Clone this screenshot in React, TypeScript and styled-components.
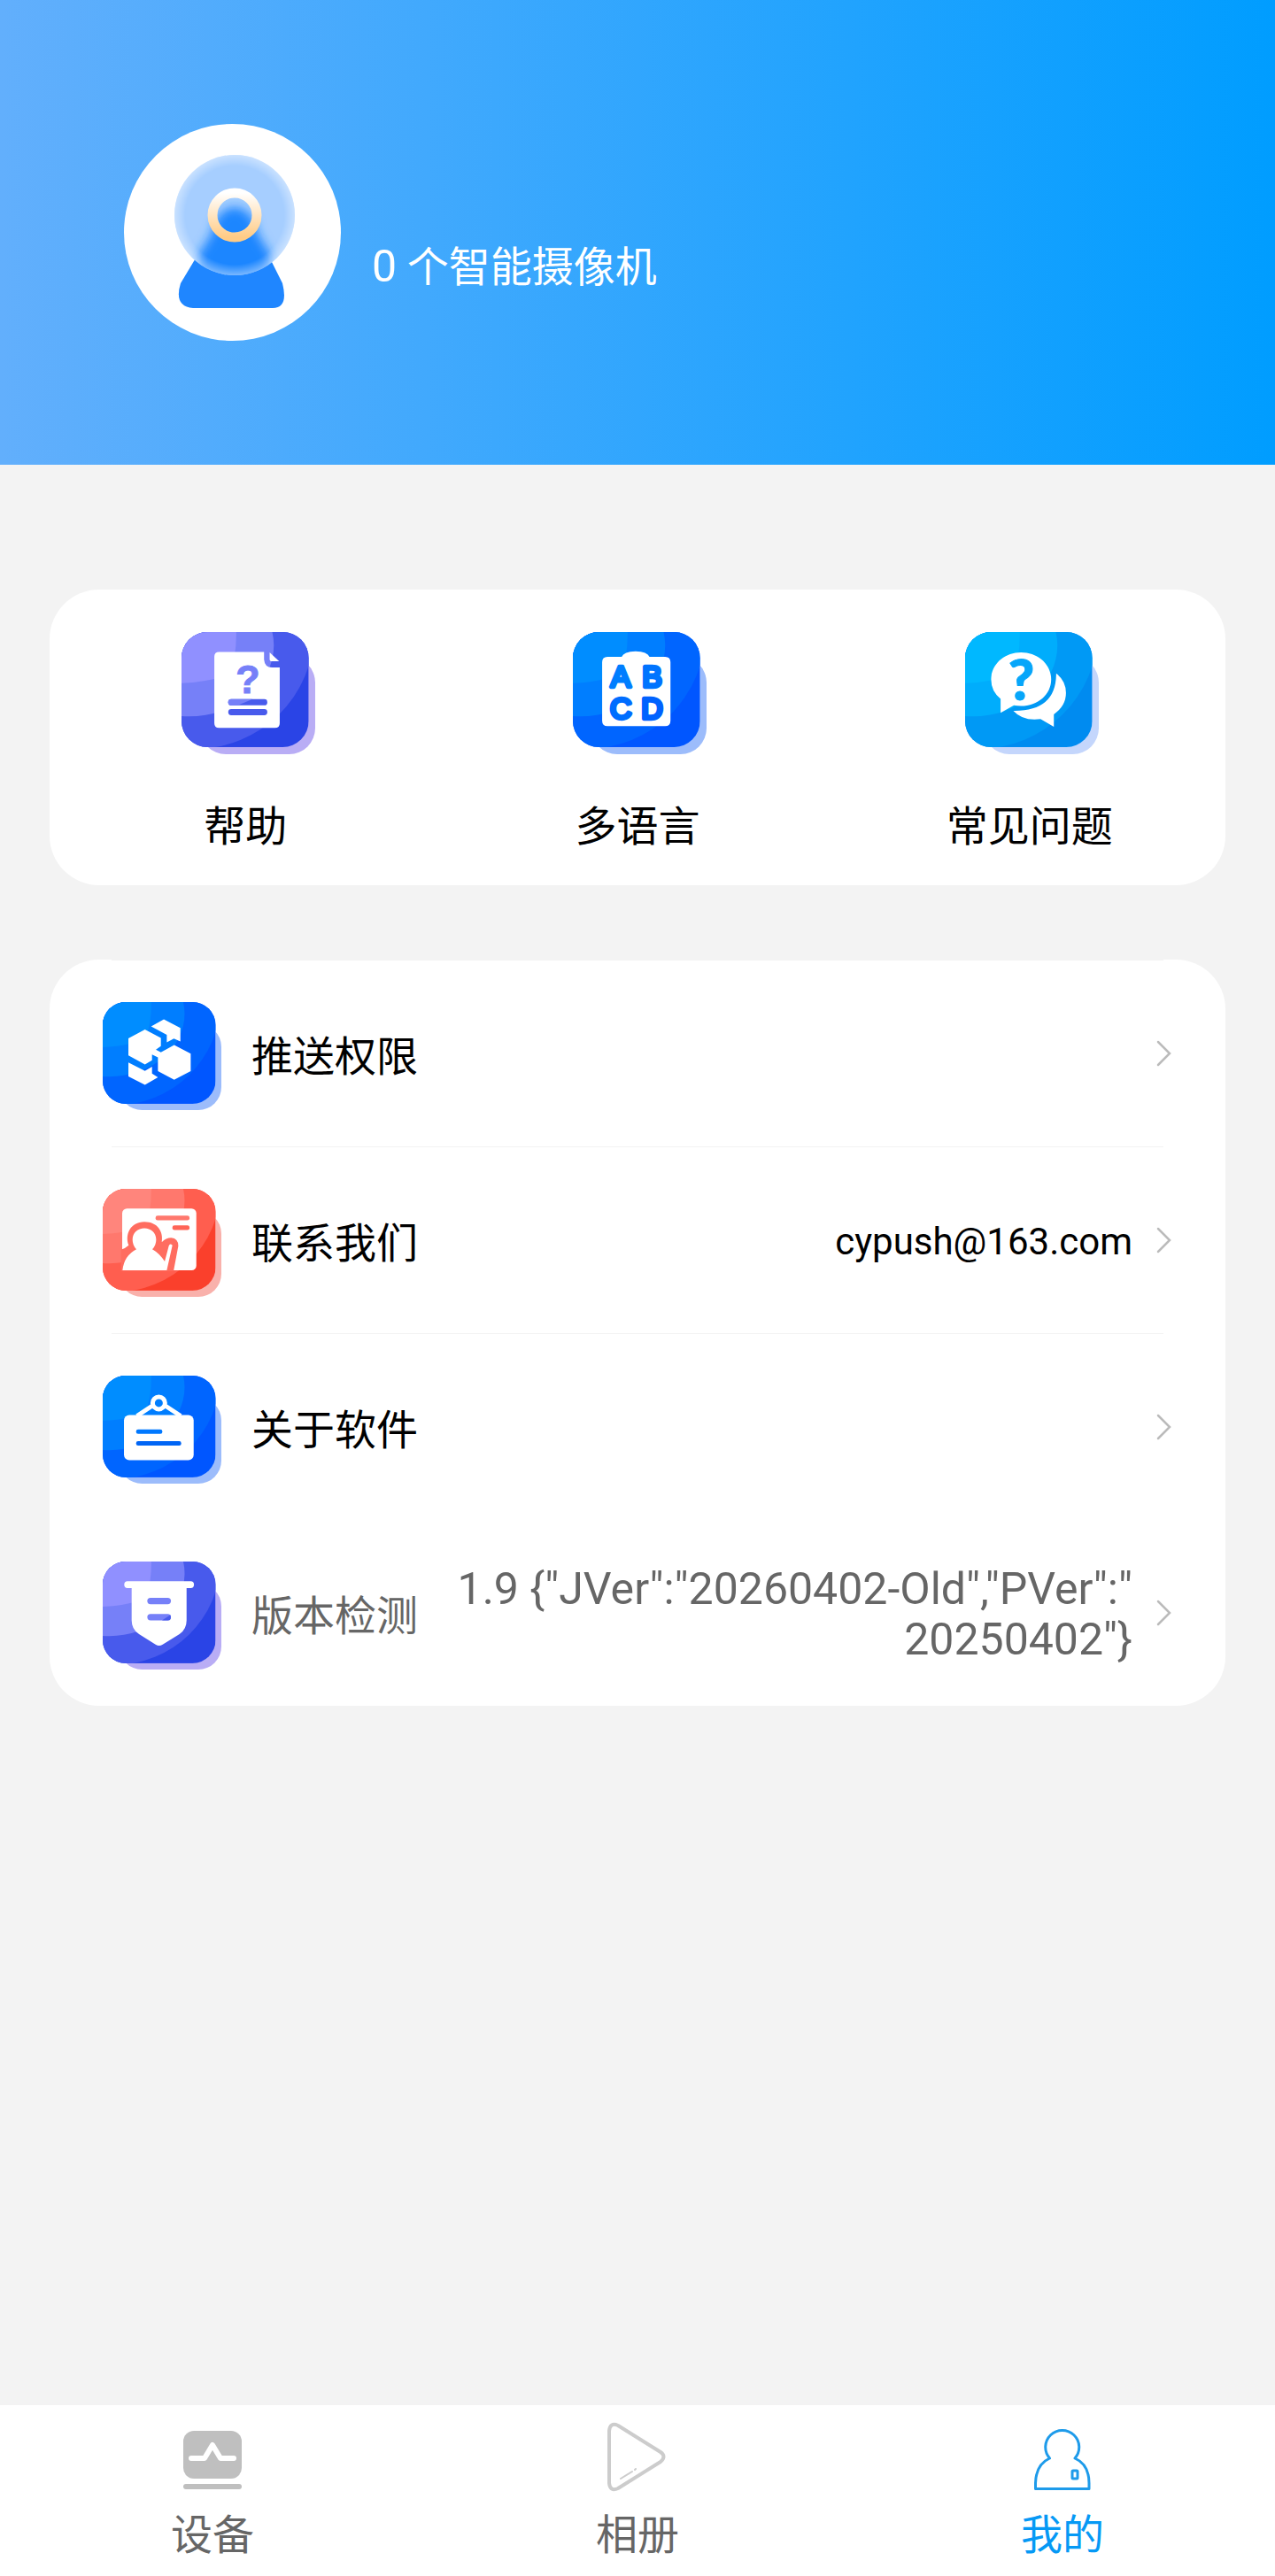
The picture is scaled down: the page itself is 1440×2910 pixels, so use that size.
import type { ReactNode } from 'react';
import styled, { createGlobalStyle } from 'styled-components';

type Palette = { bands: [string, string, string, string]; shadow: string };

const purple: Palette = { bands: ['#9090ff', '#7680f8', '#485aec', '#2a44e6'], shadow: '#b9adf5' };
const blue: Palette = { bands: ['#008dff', '#007eff', '#0065ff', '#0056ff'], shadow: '#9cbcfb' };
const cyan: Palette = { bands: ['#00b8ff', '#00adfc', '#0099f5', '#008bf0'], shadow: '#c4d6fc' };
const red: Palette = { bands: ['#ff857c', '#ff786d', '#ff5e4f', '#fa402c'], shadow: '#f9b1ab' };

type TileProps = { id: string; palette: Palette; children: ReactNode };

// rounded tile with four colour bands and an offset shadow, the glyph goes on top
const Tile = ({ id, palette, children }: TileProps) => (
  <svg viewBox="0 0 452 413" preserveAspectRatio="none" aria-hidden="true">
    <defs>
      <clipPath id={id}>
        <rect width="430" height="389" rx="88" />
      </clipPath>
    </defs>
    <rect x="62" y="83" width="390" height="330" rx="88" fill={palette.shadow} />
    <g clipPath={`url(#${id})`}>
      <rect width="430" height="389" fill={palette.bands[3]} />
      <ellipse cx="45" cy="0" rx="402" ry="395" fill={palette.bands[2]} />
      <ellipse cx="25" cy="45" rx="287" ry="240" fill={palette.bands[1]} />
      <path d="M0 0H185Q186 90 160 145Q80 170 0 173Z" fill={palette.bands[0]} />
    </g>
    {children}
  </svg>
);

const HelpIcon = () => (
  <Tile id="tile-help" palette={purple}>
    <path
      d="M129 67H279V93Q281 120 306 120H332V308Q332 324 316 324H127Q111 324 111 308V83Q111 67 127 67Z"
      fill="#fff"
    />
    <path d="M298 69L330 99H306Q298 99 298 91Z" fill="#fff" />
    <GlyphText x="224" y="206" fontSize="134" fill="#7680f8" stroke="#7680f8" strokeWidth="3">
      ?
    </GlyphText>
    <rect x="158" y="227" width="132" height="21" rx="10" fill="#485aec" />
    <path d="M168 227H240Q215 238 190 248H168A10 10 0 0 1 168 227Z" fill="#7680f8" />
    <rect x="158" y="260" width="132" height="21" rx="10" fill="#485aec" />
  </Tile>
);

const LanguageIcon = () => (
  <Tile id="tile-language" palette={blue}>
    <path
      d="M117 84H165Q172 66 212 65Q252 66 259 84H312Q330 84 330 102V300Q330 318 312 318H117Q99 318 99 300V102Q99 84 117 84Z"
      fill="#fff"
    />
    <RoundText x="162" y="187" fill="#007eff">
      A
    </RoundText>
    <RoundText x="268" y="187" fill="#0074ff">
      B
    </RoundText>
    <RoundText x="162" y="292" fill="#006dff">
      C
    </RoundText>
    <RoundText x="268" y="292" fill="#0062ff">
      D
    </RoundText>
  </Tile>
);

const FaqIcon = () => (
  <Tile id="tile-faq" palette={cyan}>
    <g transform="translate(-92 -72)">
      <path
        d="M281 141C338 141 383 181 383 232S338 322 281 322Q268 322 257 320L212 345V298Q180 272 180 232C180 181 225 141 281 141Z"
        fill="#fff"
      />
      <path
        d="M400 212Q433 237 433 278Q433 322 392 350V392L347 366Q288 374 255 338Q400 340 400 212Z"
        fill="#fff"
      />
      <BubbleText x="282" y="302" fill="#06a6fa" stroke="#06a6fa" strokeWidth="3">
        ?
      </BubbleText>
    </g>
  </Tile>
);

const PushIcon = () => (
  <Tile id="tile-push" palette={blue}>
    <g transform="scale(1.125) translate(-195 -157)" fill="#fff">
      <path d="M338 250L392 279V307L375 319L392 328L437 303L493 332V392L437 421L382 392V345L362 335V355L338 369L282 338V280Z" />
      <path d="M402 216L458 245V291L436 281L412 294V268L359 240Z" />
      <path d="M282 362L338 391L362 377V400L382 413L338 438L282 410Z" />
    </g>
  </Tile>
);

const ContactIcon = () => (
  <Tile id="tile-contact" palette={red}>
    <g transform="scale(1.125) translate(-46 -70)">
      <rect x="112" y="137" width="251" height="210" rx="16" fill="#fff" />
      <rect x="225" y="161" width="115" height="16" rx="7" fill="#ff786d" />
      <rect x="282" y="194" width="58" height="16" rx="7" fill="#ff6557" />
      <path
        d="M108 277Q122 273 134 262C120 225 140 182 187 182C232 182 252 215 246 251Q260 236 278 236Q302 238 302 264L286 349H108Z"
        fill="#ff6d60"
      />
      <path
        d="M113 347Q118 297 160 275Q147 262 147 242C147 219 165 204 187 204S227 219 227 242Q227 262 214 275Q240 290 256 317L270 263Q274 254 282 262L263 347Z"
        fill="#fff"
      />
    </g>
  </Tile>
);

const AboutIcon = () => (
  <Tile id="tile-about" palette={blue}>
    <g transform="scale(1.125) translate(-46 -73)">
      <path d="M162 210L213 176M310 210L259 176" stroke="#fff" strokeWidth="15" />
      <circle cx="236" cy="166" r="21" fill="none" stroke="#fff" strokeWidth="15" />
      <rect x="118" y="207" width="236" height="153" rx="18" fill="#fff" />
      <rect x="159" y="256" width="89" height="15" rx="7" fill="#0078ff" />
      <rect x="159" y="296" width="153" height="15" rx="7" fill="#0065f5" />
    </g>
  </Tile>
);

const VersionIcon = () => (
  <Tile id="tile-version" palette={purple}>
    <g transform="scale(1.125) translate(-195 -103)">
      <rect x="268" y="170" width="236" height="23" rx="11" fill="#fff" />
      <path
        d="M293 180H479V303Q479 333 455 350L398 385Q386 393 374 385L318 350Q293 333 293 303Z"
        fill="#fff"
      />
      <rect x="346" y="226" width="80" height="22" rx="11" fill="#7680f8" />
      <rect x="346" y="281" width="80" height="22" rx="11" fill="#7680f8" />
      <path d="M396 303L424 284Q430 303 415 303Z" fill="#485aec" />
    </g>
  </Tile>
);

const Camera = () => (
  <svg viewBox="0 0 245 245" aria-hidden="true">
    <defs>
      <linearGradient id="camera-ring" x1="0" y1="0" x2="0" y2="1">
        <stop offset="0" stopColor="#fff" />
        <stop offset="1" stopColor="#ffcb85" />
      </linearGradient>
      <radialGradient id="camera-rim">
        <stop offset="0.82" stopColor="#fff" stopOpacity="0" />
        <stop offset="1" stopColor="#fff" stopOpacity="0.4" />
      </radialGradient>
      <filter id="camera-blur" x="-30%" y="-30%" width="160%" height="160%">
        <feGaussianBlur stdDeviation="6" />
      </filter>
      <clipPath id="camera-clip">
        <circle cx="125" cy="103" r="68" />
      </clipPath>
    </defs>
    <path d="M82 150H164L179 180Q186 208 168 208H78Q56 206 64 180Z" fill="#1f86ff" />
    <circle cx="125" cy="103" r="68" fill="#a6ceff" />
    <g clipPath="url(#camera-clip)">
      <path
        d="M125 94Q146 96 151 124L166 148V180H84V148L99 124Q104 96 125 94Z"
        fill="#1f86ff"
        filter="url(#camera-blur)"
      />
    </g>
    <circle cx="125" cy="103" r="68" fill="url(#camera-rim)" />
    <circle cx="125" cy="103" r="25" fill="none" stroke="url(#camera-ring)" strokeWidth="11" />
  </svg>
);

const DeviceIcon = () => (
  <svg viewBox="0 0 80 80" aria-hidden="true">
    <rect x="7" y="11" width="66" height="54" rx="12" fill="#bfbfbf" />
    <rect x="7" y="71" width="66" height="6" rx="3" fill="#bfbfbf" />
    <path
      d="M16 42H31L40 27L49 42H64"
      fill="none"
      stroke="#fff"
      strokeWidth="6"
      strokeLinecap="round"
      strokeLinejoin="round"
    />
  </svg>
);

const AlbumIcon = () => (
  <svg viewBox="0 0 80 80" aria-hidden="true" fill="none" stroke="#ccc" strokeLinecap="round">
    <path
      d="M8 11Q9 1 18 5L66 35Q73 40 66 46L18 76Q9 80 8 70Z"
      strokeWidth="4"
      strokeLinejoin="round"
    />
    <path d="M21 65L34 57M37 55L38 54" strokeWidth="2" />
  </svg>
);

const MineIcon = () => (
  <svg viewBox="0 0 80 80" aria-hidden="true" fill="none" stroke="#1e9bea" strokeWidth="3">
    <path
      d="M25.500 42A19 19 0 1 1 54 42Q70 49 70 70V76.500H9.500V70Q10 49 25.500 42Z"
      strokeLinejoin="round"
    />
    <rect x="51" y="56" width="6" height="9" rx="1" />
  </svg>
);

const Chevron = () => (
  <ChevronIcon viewBox="0 0 18 30" aria-hidden="true">
    <path d="M2 2L15 15L2 28" fill="none" stroke="#bbb" strokeWidth="2.500" strokeLinecap="round" />
  </ChevronIcon>
);

const shortcuts = [
  { label: '帮助', icon: <HelpIcon /> },
  { label: '多语言', icon: <LanguageIcon /> },
  { label: '常见问题', icon: <FaqIcon /> },
];

const tabs = [
  { label: '设备', icon: <DeviceIcon />, active: false },
  { label: '相册', icon: <AlbumIcon />, active: false },
  { label: '我的', icon: <MineIcon />, active: true },
];

const App = () => {
  return (
    <>
      <GlobalStyle />
      <Page>
        <Header>
          <Avatar>
            <Camera />
          </Avatar>
          <DeviceCount>
            <Count>0</Count> 个智能摄像机
          </DeviceCount>
        </Header>
        <Main>
          <Shortcuts>
            {shortcuts.map((item) => (
              <Shortcut key={item.label} type="button">
                <ShortcutIcon>{item.icon}</ShortcutIcon>
                {item.label}
              </Shortcut>
            ))}
          </Shortcuts>
          <Settings>
            <Divider />
            <Row type="button">
              <RowIcon>
                <PushIcon />
              </RowIcon>
              <RowLabel>推送权限</RowLabel>
              <RowValue />
              <Chevron />
            </Row>
            <Divider />
            <Row type="button">
              <RowIcon>
                <ContactIcon />
              </RowIcon>
              <RowLabel>联系我们</RowLabel>
              <RowValue $small>cypush@163.com</RowValue>
              <Chevron />
            </Row>
            <Divider />
            <Row type="button">
              <RowIcon>
                <AboutIcon />
              </RowIcon>
              <RowLabel>关于软件</RowLabel>
              <RowValue />
              <Chevron />
            </Row>
            <Row type="button" $muted>
              <RowIcon>
                <VersionIcon />
              </RowIcon>
              <RowLabel>版本检测</RowLabel>
              <RowValue>{'1.9 {"JVer":"20260402-Old","PVer":"20250402"}'}</RowValue>
              <Chevron />
            </Row>
          </Settings>
        </Main>
        <TabBar>
          {tabs.map((tab) => (
            <Tab key={tab.label} href="#" $active={tab.active}>
              {tab.icon}
              {tab.label}
            </Tab>
          ))}
        </TabBar>
      </Page>
    </>
  );
};

export default App;

const GlobalStyle = createGlobalStyle`
  * {
    box-sizing: border-box;
  }
  body {
    margin: 0;
    background: #f3f3f3;
    font-family: Roboto, 'Noto Sans CJK SC', sans-serif;
    font-size: 47px;
    line-height: 60px;
    color: #000;
  }
  button {
    border: 0;
    padding: 0;
    background: none;
    font: inherit;
    color: inherit;
    cursor: pointer;
  }
  svg {
    display: block;
  }
`;

const GlyphText = styled.text`
  font-family: 'Liberation Sans', sans-serif;
  font-weight: 700;
  text-anchor: middle;
`;

/* thin letters with a thick round stroke, for rounded corners */
const RoundText = styled(GlyphText)`
  font-size: 101px;
  font-weight: 400;
  stroke: ${({ fill }) => fill};
  stroke-width: 13px;
  stroke-linejoin: round;
`;

const BubbleText = styled(GlyphText)`
  font-family: Lato, sans-serif;
  font-size: 190px;
  font-weight: 900;
`;

const Page = styled.div`
  display: flex;
  flex-direction: column;
  min-height: 100vh;
`;

const Header = styled.header`
  display: flex;
  align-items: flex-end;
  gap: 35px;
  padding: 140px;
  background: linear-gradient(90deg, #62affc, #009dff);
`;

const Avatar = styled.div`
  flex: none;
  width: 245px;
  height: 245px;
  border-radius: 50%;
  background: #fff;
`;

const DeviceCount = styled.div`
  padding-bottom: 53px;
  color: #fff;
`;

const Count = styled.span`
  font-size: 50px;
`;

const Main = styled.main`
  display: grid;
  gap: 84px;
  padding: 141px 56px;
`;

const Card = styled.section`
  border-radius: 56px;
  background: #fff;
`;

const Shortcuts = styled(Card)`
  display: grid;
  grid-template-columns: repeat(3, 1fr);
  padding: 48px 0 36px;
`;

const Shortcut = styled.button`
  display: flex;
  flex-direction: column;
  align-items: center;
  gap: 52px;
`;

const ShortcutIcon = styled.span`
  padding-left: 6px;
  svg {
    width: 151px;
    height: 138px;
  }
`;

const Settings = styled(Card)`
  display: flex;
  flex-direction: column;
`;

const Row = styled.button<{ $muted?: boolean }>`
  display: flex;
  align-items: center;
  height: 210px;
  padding: 0 60px;
  color: ${({ $muted }) => ($muted ? '#666' : '#000')};
  text-align: left;
`;

const RowIcon = styled.span`
  flex: none;
  padding-top: 6px;
  svg {
    width: 134px;
    height: 122px;
  }
`;

const RowLabel = styled.span`
  flex: none;
  padding: 8px 34px 0;
`;

const RowValue = styled.span<{ $small?: boolean }>`
  flex: 1;
  min-width: 0;
  padding-top: 3px;
  font-size: ${({ $small }) => ($small ? '42px' : '50px')};
  line-height: 57px;
  text-align: right;
  line-break: anywhere;
`;

const ChevronIcon = styled.svg`
  flex: none;
  width: 18px;
  height: 30px;
  margin-left: 27px;
`;

const Divider = styled.hr`
  align-self: stretch;
  height: 1px;
  margin: 0 70px;
  border: 0;
  background: #f3f3f3;
`;

const TabBar = styled.nav`
  display: grid;
  grid-template-columns: repeat(3, 1fr);
  margin-top: auto;
  padding: 18px 0 16px;
  background: #fff;
`;

const Tab = styled.a<{ $active: boolean }>`
  display: flex;
  flex-direction: column;
  align-items: center;
  gap: 19px;
  color: ${({ $active }) => ($active ? '#0699f5' : '#666')};
  text-decoration: none;
  svg {
    width: 80px;
    height: 80px;
  }
`;
